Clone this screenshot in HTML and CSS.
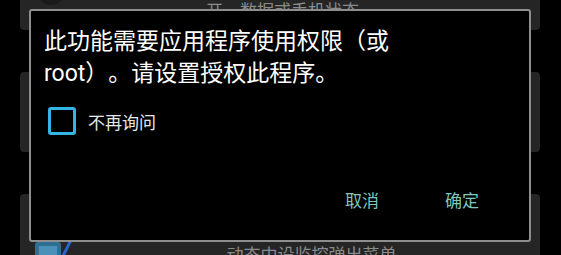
FILE: index.html
```html
<!DOCTYPE html>
<html lang="zh-CN">
<head>
    <meta charset="UTF-8">
    <meta name="viewport" content="width=device-width, initial-scale=1.0">
    <title>权限请求</title>
    <link rel="stylesheet" href="styles.css">
</head>
<body>
    <!-- 背景列表 -->
    <div class="card-list">
        <div class="card card-top">
            <div class="avatar"></div>
            <div class="card-text">
                <p>当检测到网络连接、断开、WiFi打</p>
                <p>开，数据或手机状态</p>
            </div>
        </div>
        <div class="card"></div>
        <div class="card card-bottom">
            <svg class="card-icon" width="42" height="42" viewBox="0 0 42 42">
                <rect x="2" y="2" width="26" height="30" rx="3" fill="#2f6f96"/>
                <rect x="6" y="6" width="18" height="22" fill="#4a90b8"/>
                <line x1="30" y1="16" x2="38" y2="0" stroke="#2a64c8" stroke-width="3"/>
            </svg>
            <div class="card-text">
                <p>动态中设监控弹出菜单</p>
            </div>
        </div>
    </div>

    <!-- 对话框 -->
    <div class="dialog">
        <p class="dialog-message">此功能需要应用程序使用权限（或 root）。请设置授权此程序。</p>
        <label class="check-row">
            <span class="check-box"></span>
            <span class="check-label">不再询问</span>
        </label>
        <div class="dialog-buttons">
            <button class="dialog-btn">取消</button>
            <button class="dialog-btn">确定</button>
        </div>
    </div>
</body>
</html>
```

FILE: styles.css
```css
/* Estilos gerais */
body {
    font-family: Roboto, "Noto Sans CJK SC", sans-serif;
    background-color: #000;
    color: #fff;
    margin: 0;
    padding: 0;
    width: 561px;
    height: 255px;
    overflow: hidden;
    position: relative;
    text-spacing-trim: space-all;
}

/* Lista de fundo */
.card-list {
    display: flex;
    flex-direction: column;
    gap: 42px;
    margin-top: -50px;
    padding: 0 21px 0 20px;
}

.card {
    height: 80px;
    background-color: #252525;
    border-radius: 4px;
    display: flex;
    position: relative;
}

.card-text {
    flex: 1;
    text-align: center;
    color: #8a8a8a;
    font-size: 17px;
}

.card-text p {
    margin: 0;
    line-height: 22px;
}

.card-top .card-text {
    padding-top: 28px;
    padding-right: 40px;
}

.avatar {
    width: 28px;
    height: 28px;
    border-radius: 50%;
    background-color: #1a1a1a;
    margin: 27px 0 0 17px;
}

.card-bottom {
    padding-left: 13px;
}

.card-icon {
    margin-top: 46px;
}

.card-bottom .card-text {
    padding-top: 50px;
    padding-left: 8px;
}

/* Dialogo */
.dialog {
    position: absolute;
    left: 29px;
    top: 9px;
    width: 498px;
    height: 229px;
    background-color: #000;
    border: 2px solid #8e8e8e;
    border-radius: 3px;
    display: flex;
    flex-direction: column;
}

.dialog-message {
    margin: 15px 0 0 13px;
    width: 370px;
    font-size: 23px;
    line-height: 32px;
    color: #fff;
}

.check-row {
    display: flex;
    align-items: center;
    gap: 12px;
    margin: 17px 0 0 17px;
}

.check-box {
    width: 22px;
    height: 22px;
    border: 3px solid #33b5e5;
    border-radius: 3px;
}

.check-label {
    font-size: 17px;
    color: #e8e8e8;
}

.dialog-buttons {
    display: flex;
    justify-content: flex-end;
    margin-top: auto;
    padding: 0 17px 17px 0;
}

.dialog-btn {
    width: 100px;
    height: 48px;
    background: none;
    border: none;
    font-family: Roboto, "Noto Sans CJK SC", sans-serif;
    font-size: 17px;
    color: #7fc6be;
    padding: 0;
}
```
